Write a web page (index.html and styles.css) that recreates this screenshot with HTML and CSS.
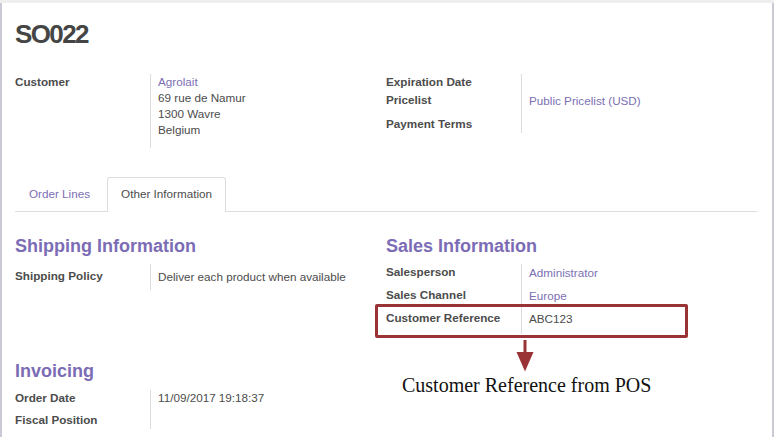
FILE: index.html
```html
<!DOCTYPE html>
<html>
<head>
<meta charset="utf-8">
<link rel="stylesheet" href="styles.css">
</head>
<body>
<div class="page">
  <div class="topband"></div>
  <div class="sheet">
    <h1 class="title">SO022</h1>

    <div class="cols top-groups">
      <div class="group">
        <div class="row">
          <div class="label">Customer</div>
          <div class="value v-customer">
            <a class="link">Agrolait</a><br>69 rue de Namur<br>1300 Wavre<br>Belgium
          </div>
        </div>
      </div>
      <div class="group">
        <div class="row">
          <div class="label">Expiration Date</div>
          <div class="value v-exp"></div>
        </div>
        <div class="row">
          <div class="label">Pricelist</div>
          <div class="value v-pricelist"><a class="link">Public Pricelist (USD)</a></div>
        </div>
        <div class="row">
          <div class="label">Payment Terms</div>
          <div class="value v-terms"></div>
        </div>
      </div>
    </div>

    <div class="tabs">
      <div class="tab">Order Lines</div>
      <div class="tab active">Other Information</div>
    </div>

    <div class="tab-content">
      <div class="cols">
        <div class="section">
          <h2 class="heading">Shipping Information</h2>
          <div class="group">
            <div class="row">
              <div class="label l-ship">Shipping Policy</div>
              <div class="value v-ship">Deliver each product when available</div>
            </div>
          </div>
        </div>
        <div class="section">
          <h2 class="heading">Sales Information</h2>
          <div class="group">
            <div class="row">
              <div class="label">Salesperson</div>
              <div class="value v-sp"><a class="link">Administrator</a></div>
            </div>
            <div class="row">
              <div class="label">Sales Channel</div>
              <div class="value v-sc"><a class="link">Europe</a></div>
            </div>
            <div class="row">
              <div class="label">Customer Reference</div>
              <div class="value v-cr">ABC123</div>
            </div>
          </div>
        </div>
        <div class="section section-invoicing">
          <h2 class="heading">Invoicing</h2>
          <div class="group">
            <div class="row">
              <div class="label">Order Date</div>
              <div class="value v-od">11/09/2017 19:18:37</div>
            </div>
            <div class="row">
              <div class="label">Fiscal Position</div>
              <div class="value v-fp"></div>
            </div>
          </div>
        </div>
      </div>
    </div>
  </div>

  <div class="callout-box"></div>
  <svg class="callout-arrow" width="18" height="32" viewBox="0 0 18 32">
    <rect x="7.5" y="0" width="3" height="13" fill="#993336"/>
    <polygon points="0.5,12 17.5,12 9,31.5" fill="#993336"/>
  </svg>
  <div class="callout-text">Customer Reference from POS</div>
</div>
</body>
</html>
```

FILE: styles.css
```css
html, body {
  margin: 0;
  padding: 0;
  background: #ffffff;
}

.page {
  position: relative;
  width: 774px;
  height: 437px;
  overflow: hidden;
  font-family: "Liberation Sans", Arial, sans-serif;
  font-size: 11.7px;
  line-height: 16px;
  color: #4c4c4c;
}

.topband {
  height: 3px;
  background: #eeeeee;
}

.sheet {
  box-sizing: border-box;
  height: 434px;
  border-left: 2px solid #cbc9d4;
  border-right: 2px solid #cbc9d4;
  padding: 16px 15px 0 13px;
  background: #ffffff;
}

.title {
  margin: 0;
  font-size: 26px;
  line-height: 30px;
  font-weight: bold;
  letter-spacing: -1.6px;
  color: #454545;
}

.cols {
  display: grid;
  grid-template-columns: 1fr 1fr;
}

.top-groups {
  margin-top: 25px;
}

.row {
  display: grid;
  grid-template-columns: 135px 1fr;
}

.label {
  font-weight: bold;
  color: #4c4c4c;
}

.value {
  border-left: 1px solid #dcdcdc;
  padding-left: 7px;
}

.link {
  color: #7c70b4;
  text-decoration: none;
}

.v-customer { padding-bottom: 10px; }
.v-exp { min-height: 18px; box-sizing: border-box; }
.v-pricelist { padding-top: 1px; padding-bottom: 7px; }
.v-terms { min-height: 17px; box-sizing: border-box; }

.tabs {
  margin-top: 29px;
  display: flex;
  border-bottom: 1px solid #dddddd;
}

.tab {
  padding: 8px 13px 9px;
  border: 1px solid transparent;
  border-bottom: 0;
  margin-right: 3px;
  color: #7c70b4;
  border-radius: 3px 3px 0 0;
}

.tab.active {
  color: #4c4c4c;
  background: #ffffff;
  border-color: #dddddd;
  margin-bottom: -1px;
  padding-bottom: 10px;
}

.tab-content {
  padding-top: 22.5px;
}

.heading {
  margin: 0 0 7.5px;
  font-size: 18px;
  line-height: 22px;
  font-weight: bold;
  color: #7b6cb5;
}

.l-ship { padding-top: 4px; }
.v-ship { padding-top: 5px; padding-bottom: 5px; }

.v-sp { padding-top: 1px; padding-bottom: 5.5px; }
.v-sc { padding-top: 1px; padding-bottom: 6px; }
.v-cr { padding-top: 1px; padding-bottom: 7.5px; }

.section-invoicing {
  margin-top: 25.5px;
}

.section-invoicing .heading {
  margin-bottom: 8px;
}

.v-od { padding-top: 0; padding-bottom: 6px; }
.v-fp { min-height: 17.5px; box-sizing: border-box; }

.callout-box {
  position: absolute;
  left: 375px;
  top: 304px;
  width: 313px;
  height: 34px;
  box-sizing: border-box;
  border: 3px solid #993336;
  border-radius: 2px;
}

.callout-arrow {
  position: absolute;
  left: 516px;
  top: 340px;
}

.callout-text {
  position: absolute;
  left: 402px;
  top: 373px;
  font-family: "Liberation Serif", "Times New Roman", serif;
  font-size: 20px;
  line-height: 24px;
  color: #111111;
  white-space: nowrap;
}
```
